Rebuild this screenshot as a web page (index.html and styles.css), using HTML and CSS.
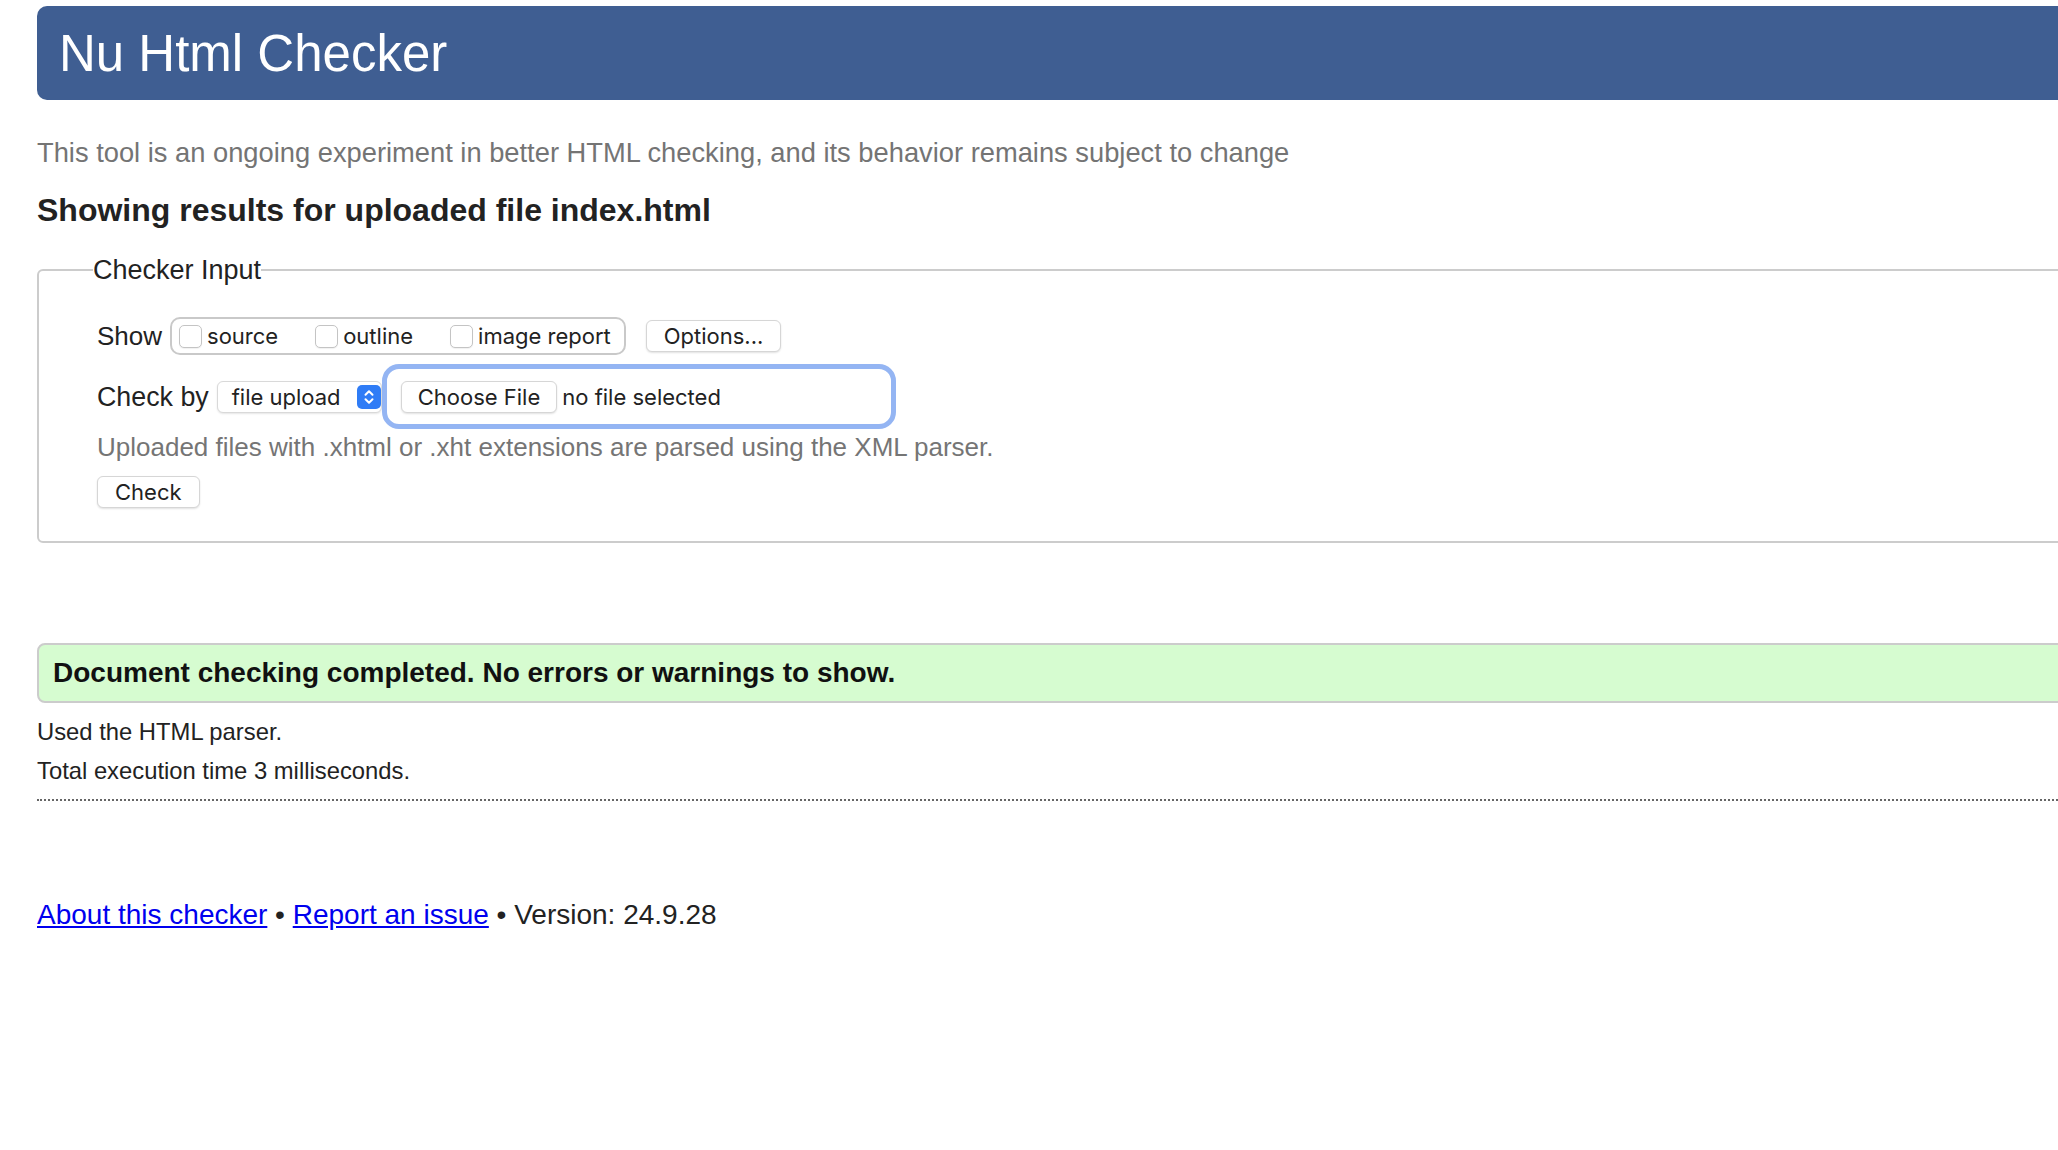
FILE: index.html
```html
<!DOCTYPE html>
<html lang="en">
<head>
<meta charset="utf-8">
<title>Showing results for uploaded file index.html - Nu Html Checker</title>
<link rel="stylesheet" href="styles.css">
</head>
<body>
<div class="page">
  <h1 class="title">Nu Html Checker</h1>
  <p class="intro">This tool is an ongoing experiment in better HTML checking, and its behavior remains subject to change</p>
  <h2 class="results-heading">Showing results for uploaded file index.html</h2>
  <form class="checker-form">
    <fieldset class="checker">
      <legend class="checker-legend">Checker Input</legend>
      <div class="row row-show">
        <span class="label">Show</span>
        <div class="show-box">
          <label class="opt"><input type="checkbox" class="cb"><span>source</span></label>
          <label class="opt"><input type="checkbox" class="cb"><span>outline</span></label>
          <label class="opt opt-last"><input type="checkbox" class="cb"><span>image report</span></label>
        </div>
        <button type="button" class="btn btn-options">Options...</button>
      </div>
      <div class="row row-check">
        <span class="label label-checkby">Check by</span>
        <div class="select">
          <span class="select-text">file upload</span>
          <span class="knob"><svg width="24" height="24" viewBox="0 0 24 24"><rect width="24" height="24" rx="5" fill="#2f7cf6"/><path d="M8.5 9.8 L12 6.3 L15.5 9.8 M8.5 14.2 L12 17.7 L15.5 14.2" fill="none" stroke="#fff" stroke-width="2" stroke-linecap="round" stroke-linejoin="round"/></svg></span>
        </div>
        <div class="file-ring">
          <span class="btn btn-file">Choose File</span>
          <span class="file-name">no file selected</span>
        </div>
      </div>
      <p class="hint">Uploaded files with .xhtml or .xht extensions are parsed using the XML parser.</p>
      <button type="button" class="btn btn-check">Check</button>
    </fieldset>
  </form>
  <p class="success">Document checking completed. No errors or warnings to show.</p>
  <p class="meta meta-first">Used the HTML parser.</p>
  <p class="meta meta-second">Total execution time 3 milliseconds.</p>
  <hr class="dots">
  <p class="footer"><a href="#">About this checker</a> • <a href="#">Report an issue</a> • Version: 24.9.28</p>
</div>
</body>
</html>
```

FILE: styles.css
```css
html {
  overflow-x: hidden;
}

body {
  margin: 0;
  background: #fff;
  color: #222;
  font-family: "Liberation Sans", Arial, sans-serif;
}

.page {
  padding: 6px 0 40px 37px;
  margin-right: -40px;
}

.title {
  margin: 0;
  background: #3f5e92;
  color: #fff;
  font-weight: normal;
  font-size: 51px;
  line-height: 59px;
  padding: 18px 0 17px 22px;
  border-radius: 10px 0 0 10px;
}

.intro {
  margin: 37px 0 0;
  font-size: 27.3px;
  line-height: 32px;
  color: #747474;
}

.results-heading {
  margin: 22px 0 0;
  font-size: 32px;
  line-height: 38px;
  font-weight: bold;
  color: #222;
}

.checker-form {
  margin: 25px 0 0;
}

.checker {
  margin: 0;
  border: 2px solid #cccccc;
  border-radius: 6px 0 0 6px;
  padding: 31px 0 33px 58px;
  min-inline-size: 0;
}

.checker-legend {
  padding: 0;
  margin-left: -4px;
  font-size: 27px;
  line-height: 32px;
  color: #222;
}

.row {
  display: flex;
  align-items: center;
}

.label {
  font-size: 26px;
  line-height: 32px;
  color: #222;
}

.label-checkby {
  font-size: 26.8px;
}

.row-show .label {
  margin-right: 8px;
}

.show-box {
  display: flex;
  align-items: center;
  height: 38px;
  box-sizing: border-box;
  border: 2px solid #c9c9c9;
  border-radius: 10px;
  padding: 0 13px 0 7px;
}

.opt {
  display: flex;
  align-items: center;
  margin-right: 37px;
  font-family: Inter, "Liberation Sans", sans-serif;
  font-size: 22px;
  color: #222;
}

.opt-last {
  margin-right: 0;
}

.cb {
  appearance: none;
  -webkit-appearance: none;
  margin: 0 5px 0 0;
  width: 23px;
  height: 23px;
  box-sizing: border-box;
  border: 1px solid #c4c4c4;
  border-radius: 5px;
  background: #fff;
  box-shadow: 0 1px 1px rgba(0, 0, 0, 0.06);
}

.btn {
  display: inline-flex;
  align-items: center;
  box-sizing: border-box;
  height: 32px;
  margin: 0;
  border: 1px solid #d6d6d6;
  border-radius: 6px;
  background: #fff;
  box-shadow: 0 1px 2px rgba(0, 0, 0, 0.12);
  font-family: Inter, "Liberation Sans", sans-serif;
  font-size: 22px;
  line-height: 30px;
  color: #222;
  cursor: default;
}

.btn-options {
  margin-left: 20px;
  padding: 0 17px;
}

.row-check {
  margin-top: 9px;
}

.row-check .label {
  margin-right: 8px;
}

.select {
  display: flex;
  align-items: center;
  justify-content: space-between;
  box-sizing: border-box;
  width: 165px;
  height: 32px;
  border: 1px solid #d9d9d9;
  border-radius: 6px;
  background: #fff;
  box-shadow: 0 1px 2px rgba(0, 0, 0, 0.1);
  padding: 0 0 0 14px;
  font-family: Inter, "Liberation Sans", sans-serif;
  font-size: 22px;
  color: #222;
}

.knob {
  display: flex;
  width: 24px;
  height: 24px;
}

.file-ring {
  display: flex;
  align-items: center;
  box-sizing: border-box;
  width: 514px;
  height: 65px;
  border: 5px solid #94b5f3;
  border-radius: 17px;
  padding: 0 0 0 14px;
}

.btn-file {
  padding: 0 16px;
}

.file-name {
  margin-left: 5px;
  font-family: Inter, "Liberation Sans", sans-serif;
  font-size: 22px;
  color: #222;
}

.hint {
  margin: 3px 0 0;
  font-size: 26px;
  line-height: 30px;
  color: #757575;
}

.btn-check {
  margin-top: 14px;
  padding: 0 17px;
}

.success {
  margin: 100px 0 0;
  box-sizing: border-box;
  height: 60px;
  border: 2px solid #cccccc;
  border-radius: 8px 0 0 8px;
  background: #d6fcd0;
  padding: 0 0 0 14px;
  font-size: 28px;
  line-height: 56px;
  font-weight: bold;
  color: #111;
}

.meta {
  margin: 0;
  font-size: 23.8px;
  line-height: 30px;
  color: #222;
}

.meta-first {
  margin-top: 14px;
}

.meta-second {
  margin-top: 9px;
}

.dots {
  margin: 13px 0 0;
  height: 0;
  border: 0;
  border-top: 2px dotted #666;
}

.footer {
  margin: 97px 0 0;
  font-size: 28px;
  line-height: 34px;
  color: #222;
}

.footer a {
  color: #0000ee;
}
```
